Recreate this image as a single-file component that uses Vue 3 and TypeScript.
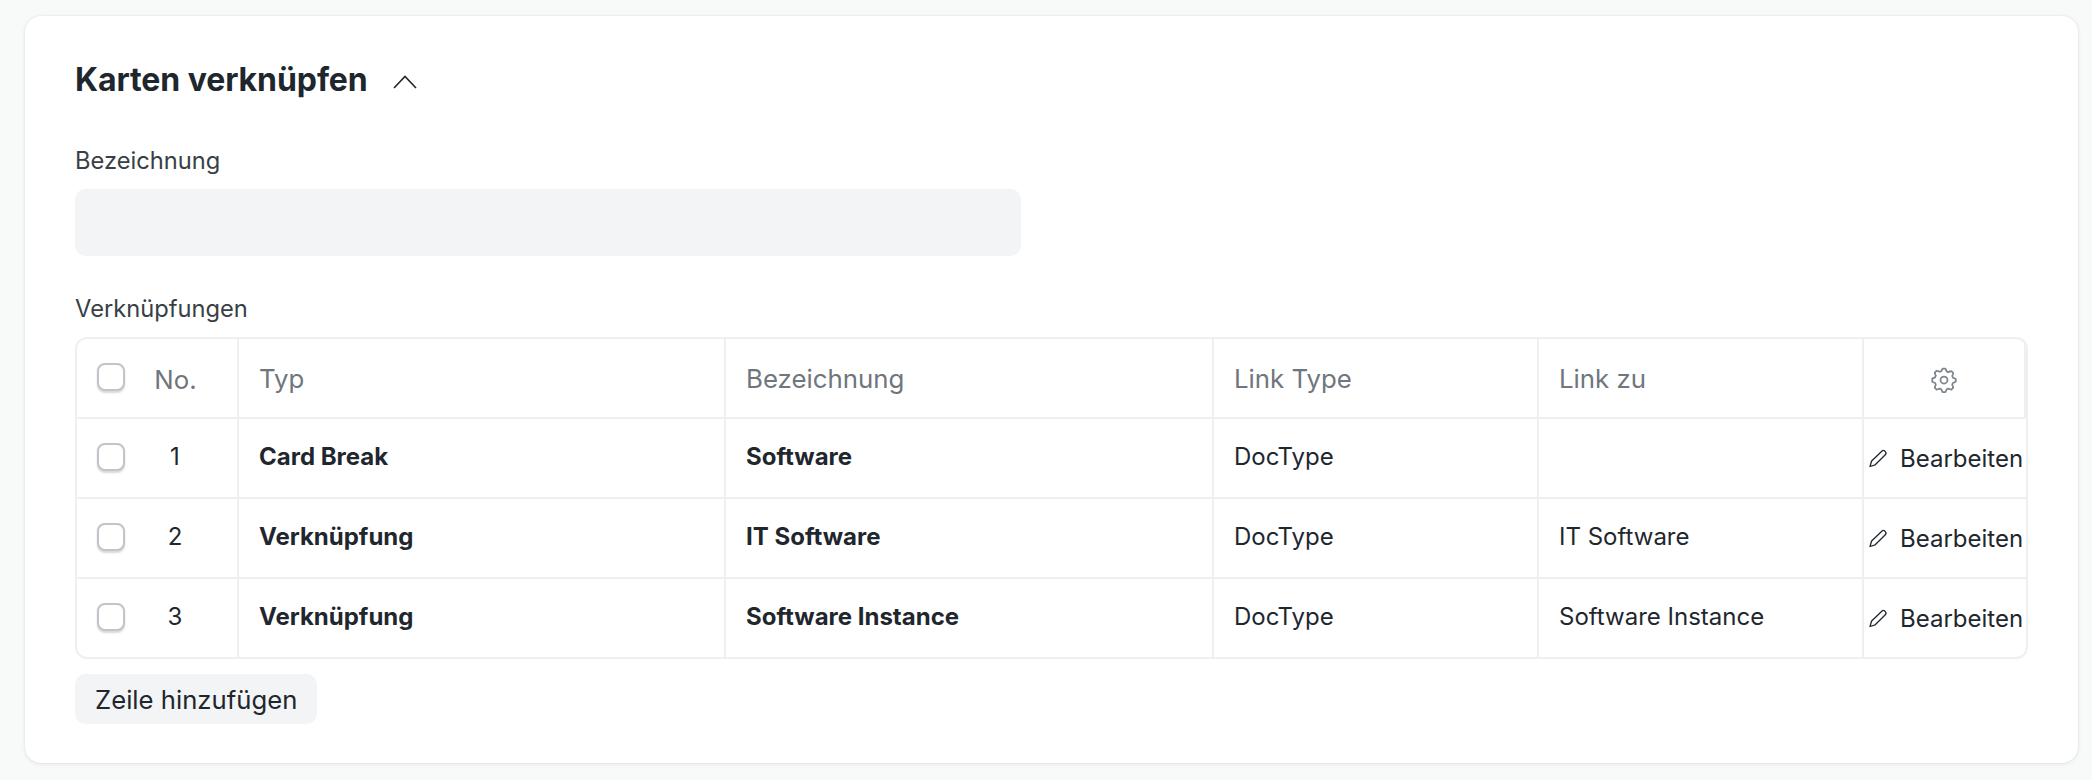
<script setup lang="ts">
interface Row { no: number; typ: string; name: string; linkType: string; linkTo: string }
const rows: Row[] = [
  { no: 1, typ: 'Card Break', name: 'Software', linkType: 'DocType', linkTo: '' },
  { no: 2, typ: 'Verknüpfung', name: 'IT Software', linkType: 'DocType', linkTo: 'IT Software' },
  { no: 3, typ: 'Verknüpfung', name: 'Software Instance', linkType: 'DocType', linkTo: 'Software Instance' },
]
</script>

<template>
  <div class="page">
    <section class="card">
      <header class="head">
        <h2 class="title">Karten verknüpfen</h2>
        <svg class="chev" width="24" height="14" viewBox="0 0 24 14" fill="none" stroke="#1f272e" stroke-width="1.6"><path d="M1 13 12 1.5 23 13" /></svg>
      </header>
      <label class="label l1">Bezeichnung</label>
      <div class="input"></div>
      <label class="label l2">Verknüpfungen</label>
      <div class="table">
        <div class="row hdr">
          <div class="cell c0"><span class="check"></span><span class="no">No.</span></div>
          <div class="cell c1">Typ</div>
          <div class="cell c2">Bezeichnung</div>
          <div class="cell c3">Link Type</div>
          <div class="cell c4">Link zu</div>
          <div class="cell c5 gear">
            <svg width="28" height="28" viewBox="0 0 16 16" fill="none" stroke="#7c848c" stroke-width="1" stroke-linejoin="round">
              <path d="M6.9 2.1 7.2 1.5h1.6l.3.6.4 1 1 .4 1-.4.7-.2 1.1 1.1-.2.7-.4 1 .4 1 1 .4.6.3v1.6l-.6.3-1 .4-.4 1 .4 1 .2.7-1.1 1.1-.7-.2-1-.4-1 .4-.4 1-.3.6H7.2l-.3-.6-.4-1-1-.4-1 .4-.7.2-1.1-1.1.2-.7.4-1-.4-1-1-.4-.6-.3V7.2l.6-.3 1-.4.4-1-.4-1-.2-.7 1.1-1.1.7.2 1 .4 1-.4z" />
              <circle cx="8" cy="8" r="2" />
            </svg>
          </div>
        </div>
        <div v-for="r in rows" :key="r.no" class="row">
          <div class="cell c0"><span class="check"></span><span class="num">{{ r.no }}</span></div>
          <div class="cell c1 bold">{{ r.typ }}</div>
          <div class="cell c2 bold">{{ r.name }}</div>
          <div class="cell c3">{{ r.linkType }}</div>
          <div class="cell c4">{{ r.linkTo }}</div>
          <div class="cell c5 edit">
            <svg width="21" height="21" viewBox="0 0 21 21" fill="none" stroke="#1f272e" stroke-width="1.3" stroke-linejoin="round"><path d="M2 18.5 3.6 13 13.8 3.2a2.2 2.2 0 0 1 3.1 0l.4.4a2.2 2.2 0 0 1 0 3.1L7.2 16.8z" /></svg>
            <span>Bearbeiten</span>
          </div>
        </div>
      </div>
      <button class="add" type="button">Zeile hinzufügen</button>
    </section>
  </div>
</template>

<style scoped>
.page {
  min-height: 780px;
  box-sizing: border-box;
  padding: 16px 14px 17px 25px;
  background: #f8f9f9;
  font-family: Inter, "Liberation Sans", sans-serif;
  color: #1f272e;
}
.card {
  box-sizing: border-box;
  height: 747px;
  padding: 0 50px;
  background: #fff;
  border-radius: 16px;
  box-shadow: 0 0 2px rgba(0, 0, 0, 0.1), 0 1px 5px rgba(0, 0, 0, 0.07);
}
.head {
  display: flex;
  align-items: center;
  height: 48px;
  padding-top: 40px;
}
.title {
  margin: 0;
  font-size: 32px;
  line-height: 48px;
  font-weight: 700;
  letter-spacing: -0.08px;
  color: #1f272e;
}
.chev { margin-left: 25px; margin-top: 3px; }
.label {
  display: block;
  font-size: 23.7px;
  line-height: 30px;
  color: #383f45;
}
.l1 { margin-top: 42px; }
.l2 { margin-top: 38px; }
.input {
  width: 946px;
  height: 67px;
  margin-top: 13px;
  background: #f3f4f6;
  border-radius: 10.5px;
}
.table {
  box-sizing: border-box;
  width: 1953px;
  margin-top: 13px;
  border: 2px solid #eeeff0;
  border-radius: 12px;
  overflow: hidden;
}
.row {
  display: flex;
  height: 80px;
  box-sizing: border-box;
  border-top: 2px solid #eeeff0;
  font-size: 24px;
}
.hdr {
  border-top: 0;
  height: 78px;
  color: #6f767d;
  font-size: 25.8px;
}
.cell {
  box-sizing: border-box;
  display: flex;
  align-items: center;
  padding: 0 20px 3px;
  border-right: 2px solid #eeeff0;
  white-space: nowrap;
  overflow: hidden;
}
.hdr .cell { padding-top: 1px; padding-bottom: 0; }
.c0 { width: 162px; padding: 0 0 3px 20px; }
.hdr .c0 { padding: 0 0 3px 20px; }
.c1 { width: 487px; }
.c2 { width: 488px; }
.c3 { width: 325px; }
.c4 { width: 325px; }
.c5 { flex: 1; padding: 0; border-right: 0; }
.hdr .c5 { border-right: 2px solid #eeeff0; padding: 3px 0 0; }
.bold { font-weight: 700; }
.check {
  box-sizing: border-box;
  flex: none;
  width: 28px;
  height: 28px;
  background: #fff;
  border: 2px solid #bfc5cb;
  border-radius: 8px;
  box-shadow: 0 1.5px 2px rgba(0, 0, 0, 0.15);
}
.no, .num { flex: 1; text-align: center; padding-left: 5px; padding-right: 17px; }
.no { padding-top: 5px; padding-left: 6px; }
.gear { justify-content: center; }
.edit { padding-left: 4px; gap: 11px; }
.add {
  display: block;
  height: 50px;
  margin-top: 15px;
  padding: 0 20px;
  border: 0;
  border-radius: 10.5px;
  background: #f3f4f6;
  color: #1f272e;
  font-family: inherit;
  font-size: 25.7px;
}
</style>
